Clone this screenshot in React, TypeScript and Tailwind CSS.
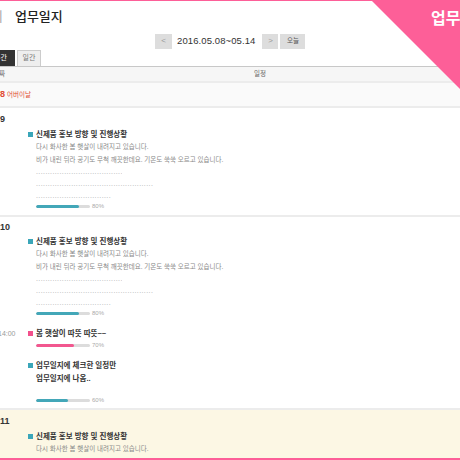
import React from 'react';

type Item = {
  time?: string;
  color: 'teal' | 'pink';
  title: string[];
  desc?: string[];
  dots?: number[];
  percent: number;
  gap?: boolean;
};

const font = { fontFamily: '"Liberation Sans", "Noto Sans CJK KR", sans-serif' };

const ProgressBar: React.FC<{ percent: number; color: 'teal' | 'pink' }> = ({ percent, color }) => (
  <div className="flex items-center h-[8px]">
    <div className="w-[54px] h-[3px] rounded-full bg-[#dcdcdc] overflow-hidden">
      <div
        className={color === 'teal' ? 'h-full rounded-full bg-[#43a7b8]' : 'h-full rounded-full bg-[#f2578f]'}
        style={{ width: `${percent}%` }}
      />
    </div>
    <span className="ml-[2px] text-[6px] leading-[8px] text-[#aaa]">{percent}%</span>
  </div>
);

const ScheduleItem: React.FC<{ item: Item }> = ({ item }) => (
  <div className="flex">
    <div className="w-[28px] shrink-0 -ml-[2px] text-[7px] leading-[11px] text-[#999]">{item.time}</div>
    <div className="w-[10px] shrink-0 pt-[3px]">
      <div className={item.color === 'teal' ? 'w-[5px] h-[5px] ml-[2px] bg-[#3aa6b9]' : 'w-[5px] h-[5px] ml-[2px] bg-[#f2508c]'} />
    </div>
    <div className="flex flex-col">
      <div className="-my-[1px]">
        {item.title.map((t) => (
          <div key={t} className="text-[7.5px] leading-[13px] font-bold text-[#333] whitespace-nowrap">
            {t}
          </div>
        ))}
      </div>
      {item.desc && (
        <div>
          {item.desc.map((d) => (
            <div key={d} className="text-[6.5px] leading-[13px] text-[#888] whitespace-nowrap">
              {d}
            </div>
          ))}
        </div>
      )}
      {item.dots && (
        <div>
          {item.dots.map((w, i) => (
            <div
              key={i}
              className="text-[7px] leading-[12px] tracking-[0.4px] text-[#aaa] overflow-hidden whitespace-nowrap"
              style={{ width: w }}
            >
              ................................................................................
            </div>
          ))}
        </div>
      )}
      <div className={item.gap ? 'mt-[12px]' : item.desc ? 'mt-[0px]' : 'mt-[2px]'}>
        <ProgressBar percent={item.percent} color={item.color} />
      </div>
    </div>
  </div>
);

const base: Item = {
  color: 'teal',
  title: ['신제품 홍보 방향 및 진행상황'],
  desc: ['다시 화사한 봄 햇살이 내려지고 있습니다.', '비가 내린 뒤라 공기도 무척 깨끗한데요. 기온도 쑥쑥 오르고 있습니다.'],
  dots: [86, 117, 75],
  percent: 80,
};

export default function App() {
  return (
    <div className="relative w-[460px] h-[460px] overflow-hidden bg-white border-t border-[#fd5f98]" style={font}>
      {/* corner badge */}
      <div className="absolute top-0 right-0 z-10 w-[88px] h-[88px] bg-[#fd5f98] [clip-path:polygon(0_0,100%_0,100%_100%)]">
        <div className="absolute left-[59px] top-[8px] text-[16px] leading-[20px] font-bold text-white whitespace-nowrap">
          업무일지
        </div>
      </div>

      {/* header */}
      <div className="h-[26px] flex items-end pb-[1px]">
        <span className="-ml-[21px] text-[13px] leading-[18px] text-[#aaa]">관리</span>
        <span className="ml-[12px] text-[13px] leading-[18px] font-medium text-[#222]">업무일지</span>
      </div>

      <div className="flex items-center h-[16px] mt-[6px] pl-[155px]">
        <div className="w-[17px] h-[15px] bg-[#ddd] flex items-center justify-center text-[8px] text-[#999]">&lt;</div>
        <span className="ml-[5px] text-[9.5px] text-[#333] tracking-[0.1px]">2016.05.08~05.14</span>
        <div className="ml-[7px] w-[16px] h-[15px] bg-[#ddd] flex items-center justify-center text-[8px] text-[#999]">&gt;</div>
        <div className="ml-[2px] w-[25px] h-[15px] bg-[#ddd] flex items-center justify-center text-[6.5px] text-[#555]">오늘</div>
      </div>

      {/* tabs */}
      <div className="flex h-[16px] mt-[1px] -ml-[14px]">
        <div className="w-[29px] bg-[#333] text-white text-[7px] flex items-center justify-center">주간</div>
        <div className="ml-[2px] w-[24px] bg-[#eee] border border-b-0 border-[#ccc] text-[#777] text-[7px] flex items-center justify-center">
          일간
        </div>
      </div>

      {/* table */}
      <div className="border-t border-[#c8c8c8]">
        <div className="h-[16px] bg-[#f6f6f6] border-b-2 border-[#ececec] flex items-center text-[6.5px] text-[#666]">
          <span className="-ml-[7px]">날짜</span>
          <span className="ml-[249px]">일정</span>
        </div>

        <div className="h-[25px] bg-[#fafafa] border-b-2 border-[#ececec] flex items-center">
          <span className="text-[9px] font-bold text-[#e04a32]">8</span>
          <span className="ml-[2px] text-[6.5px] text-[#e04a32]">어버이날</span>
        </div>

        <div className="h-[109px] border-b-2 border-[#ececec] pt-[6px]">
          <div className="text-[9px] leading-[10px] font-bold text-[#333]">9</div>
          <div className="mt-[5px]">
            <ScheduleItem item={base} />
          </div>
        </div>

        <div className="h-[193px] border-b-2 border-[#ececec] pt-[5px]">
          <div className="text-[9px] leading-[10px] font-bold text-[#333]">10</div>
          <div className="mt-[4px] flex flex-col gap-[11px]">
            <ScheduleItem item={base} />
            <ScheduleItem item={{ time: '14:00', color: 'pink', title: ['봄 햇살이 따뜻 따뜻~~'], percent: 70 }} />
            <ScheduleItem
              item={{ color: 'teal', title: ['업무일지에 체크한 일정만', '업무일지에 나옴..'], percent: 60, gap: true }}
            />
          </div>
        </div>

        <div className="h-[60px] bg-[#fcf7e4] pt-[6px]">
          <div className="text-[9px] leading-[10px] font-bold text-[#333]">11</div>
          <div className="mt-[5px]">
            <ScheduleItem item={base} />
          </div>
        </div>
      </div>

      <div className="absolute bottom-0 left-0 right-0 h-[2px] bg-[#fd5f98]" />
    </div>
  );
}
